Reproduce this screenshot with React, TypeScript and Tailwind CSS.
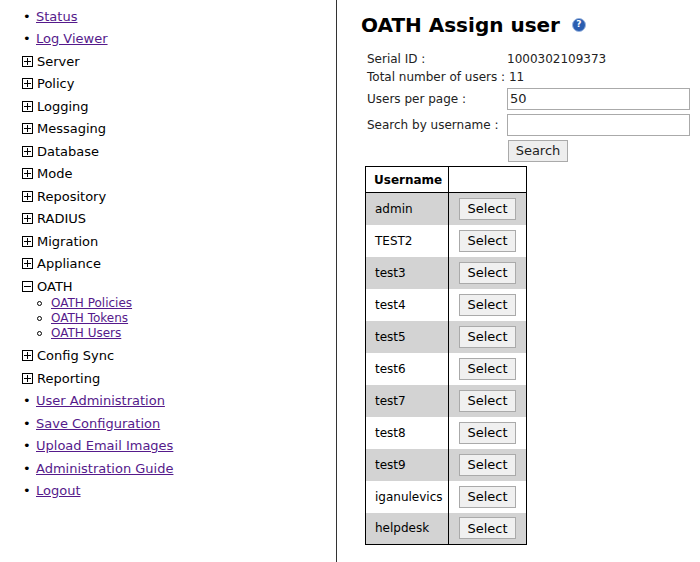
import React from "react";

const Plus = ({ minus = false }: { minus?: boolean }) => (
  <svg width="11" height="11" viewBox="0 0 11 11" className="shrink-0">
    <rect x="0.5" y="0.5" width="10" height="10" fill="white" stroke="black" />
    <line x1="2" y1="5.5" x2="9" y2="5.5" stroke="black" />
    {!minus && <line x1="5.5" y1="2" x2="5.5" y2="9" stroke="black" />}
  </svg>
);

const Link = ({ t }: { t: string }) => (
  <div className="flex items-center h-[22.5px]">
    <span className="w-[14px] pl-[1px] text-[13px]">•</span>
    <a className="text-[#551a8b] underline">{t}</a>
  </div>
);
const Node = ({ t, minus }: { t: string; minus?: boolean }) => (
  <div className="flex items-center h-[22.5px] gap-[4px]">
    <Plus minus={minus} />
    <span>{t}</span>
  </div>
);

const users = ["admin", "TEST2", "test3", "test4", "test5", "test6", "test7", "test8", "test9", "iganulevics", "helpdesk"];

export default function App() {
  return (
    <div className="flex w-[700px] h-[562px] bg-white text-black" style={{ fontFamily: "'DejaVu Sans', Verdana, sans-serif" }}>
      <div className="w-[337px] border-r border-[#333] pl-[22px] pt-[5px] text-[13px]">
        <Link t="Status" />
        <Link t="Log Viewer" />
        {["Server", "Policy", "Logging", "Messaging", "Database", "Mode", "Repository", "RADIUS", "Migration", "Appliance"].map((t) => (
          <Node key={t} t={t} />
        ))}
        <Node t="OATH" minus />
        <div className="pl-[15px] text-[12px] -mt-[2px] mb-[4px]">
          {["OATH Policies", "OATH Tokens", "OATH Users"].map((t) => (
            <div key={t} className="flex items-center h-[15px]">
              <span className="inline-block w-[5px] h-[5px] rounded-full border border-black mr-[9px]" />
              <a className="text-[#551a8b] underline">{t}</a>
            </div>
          ))}
        </div>
        <Node t="Config Sync" />
        <Node t="Reporting" />
        <Link t="User Administration" />
        <Link t="Save Configuration" />
        <Link t="Upload Email Images" />
        <Link t="Administration Guide" />
        <Link t="Logout" />
      </div>
      <div className="pl-[24px] pt-[12px] flex-1" style={{ fontFamily: "Tahoma, 'DejaVu Sans', sans-serif" }}>
        <div className="flex items-center gap-[12px] h-[26px]">
          <span className="text-[20px] font-bold" style={{ fontFamily: "'DejaVu Sans', sans-serif" }}>OATH Assign user</span>
          <span className="w-[14px] h-[14px] rounded-full bg-[#2a5db0] border border-[#9bb6e0] text-white text-[9px] font-bold flex items-center justify-center">?</span>
        </div>
        <div className="pl-[6px] pt-[12px] text-[12px] text-[#222]">
          <div className="flex h-[18px] items-center"><span className="w-[140px]">Serial ID :</span><span>1000302109373</span></div>
          <div className="flex h-[18px] items-center"><span>Total number of users : 11</span></div>
          <div className="flex h-[26px] items-center"><span className="w-[140px]">Users per page :</span><div className="w-[183px] h-[22px] border border-[#aaa] px-[2px] text-[13px] flex items-center">50</div></div>
          <div className="flex h-[26px] items-center"><span className="w-[140px]">Search by username :</span><div className="w-[183px] h-[22px] border border-[#aaa]" /></div>
          <div className="flex h-[26px] items-center"><span className="w-[141px]" /><div className="w-[60px] h-[22px] border border-[#aaa] bg-[#eee] text-[13px] flex items-center justify-center">Search</div></div>
        </div>
        <table className="ml-[4px] mt-[2px] border border-black border-collapse text-[12px]">
          <thead>
            <tr className="h-[26px]">
              <th className="border border-black w-[83px] text-left pl-[8px]">Username</th>
              <th className="border border-black w-[78px]"></th>
            </tr>
          </thead>
          <tbody>
            {users.map((u, i) => (
              <tr key={u} className={`h-[32px] ${i % 2 === 0 ? "bg-[#d3d3d3]" : "bg-white"}`}>
                <td className="border-r border-black pl-[9px]">{u}</td>
                <td className="pl-[10px]">
                  <div className="w-[57px] h-[22px] border border-[#aaa] bg-[#f0f0f0] text-[13px] flex items-center justify-center">Select</div>
                </td>
              </tr>
            ))}
          </tbody>
        </table>
      </div>
    </div>
  );
}
